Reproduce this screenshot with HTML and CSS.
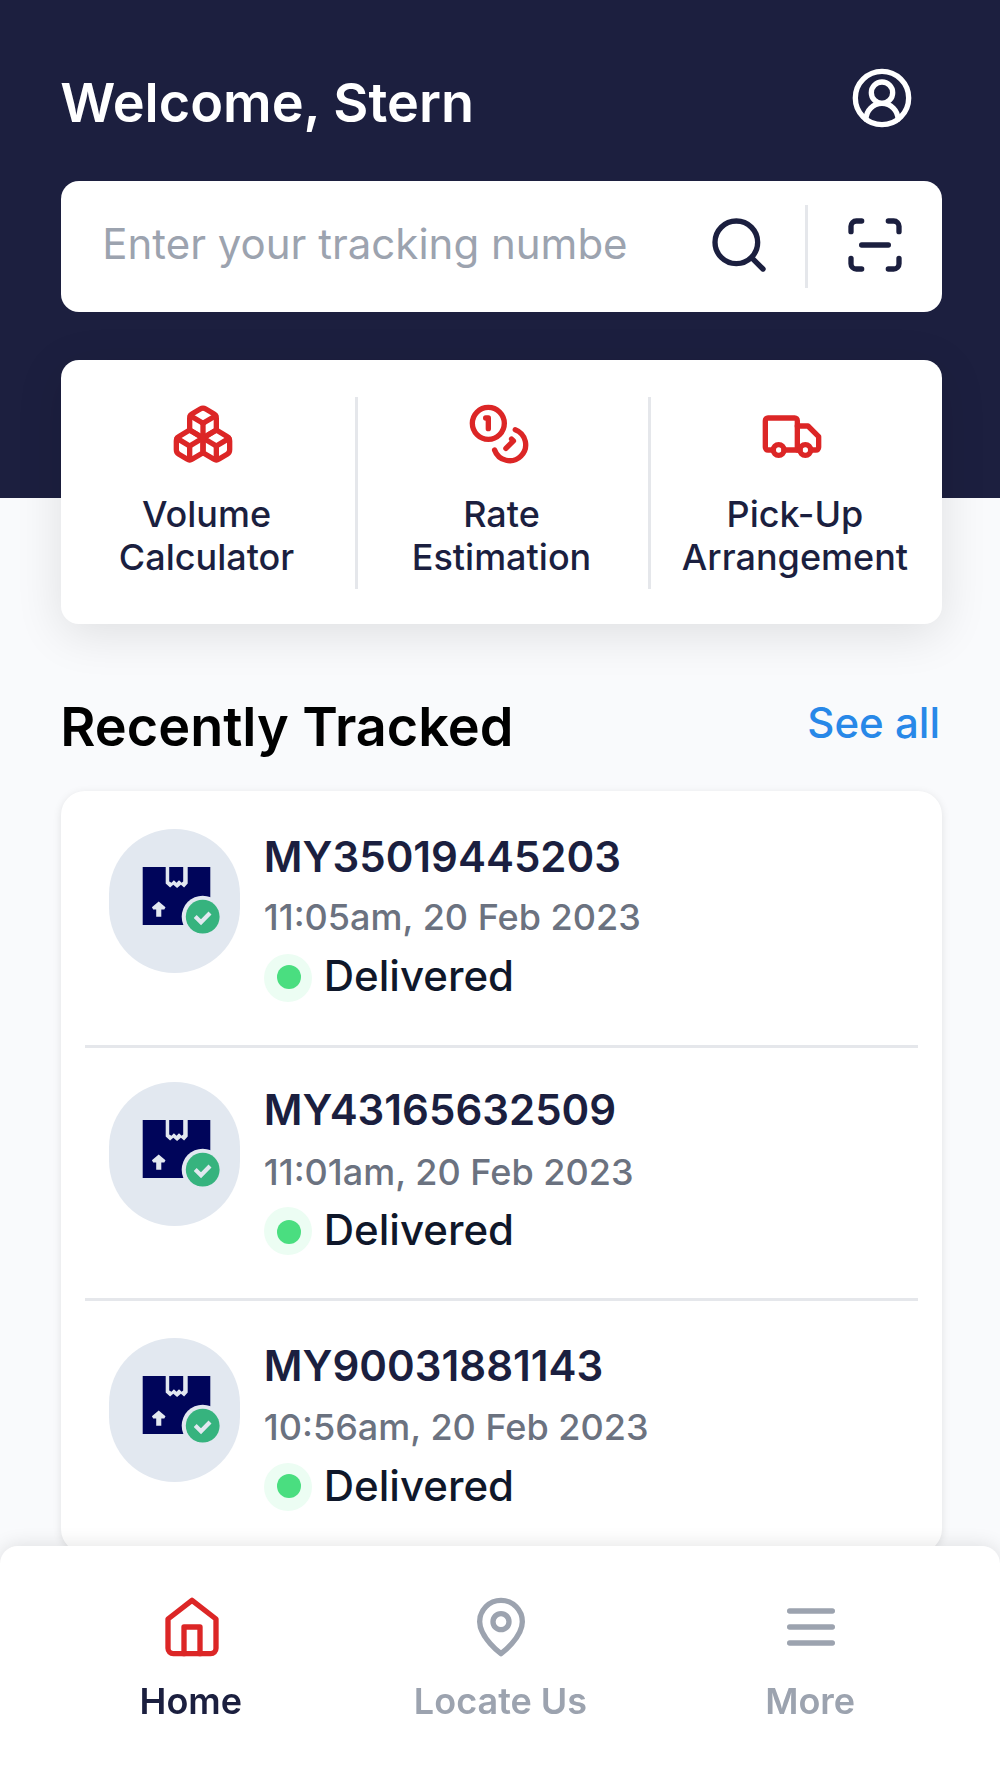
FILE: index.html
```html
<!DOCTYPE html>
<html lang="en">
<head>
    <meta charset="UTF-8">
    <meta name="viewport" content="width=device-width, initial-scale=1.0">
    <title>Parcel Tracking</title>
    <link rel="stylesheet" href="styles.css">
</head>
<body>
<!-- Shared package icon -->
<svg class="sprite" width="0" height="0">
    <symbol id="package" viewBox="0 0 131 144">
        <path fill="#00055a" d="M33.7 38h67.6v58H33.7z"/>
        <path fill="#e2e8f0" d="M56.7 37.5h22v17l-3.6 4-3.2-2.8-3.8 3.3-3.8-3.3-3.2 2.8-4.4-4z"/>
        <path fill="#00055a" d="M60.2 38h14v14.4l-1.6 1.4-2.6-2.6-2.5 2.6-2.6-2.6-2.4 2.6-2.3-1.4z"/>
        <path fill="#e2e8f0" d="M49.7 72.6l6.8 5.6-1.2 2.2h-3v7.4h-5.1v-7.4h-3l-1.3-2.2z"/>
        <circle cx="93.7" cy="87.7" r="21" fill="#e2e8f0"/>
        <circle cx="93.7" cy="87.7" r="16.9" fill="#36b37e"/>
        <path d="M86.2 87.6l5.8 5.6 9-9.2" fill="none" stroke="#e2e8f0" stroke-width="4.2"/>
    </symbol>
</svg>

<div class="header">
    <div class="header-top">
        <h1>Welcome, Stern</h1>
        <svg class="icon profile" viewBox="0 0 24 24"><path d="M18 20a6 6 0 0 0-12 0"/><circle cx="12" cy="10" r="4"/><circle cx="12" cy="12" r="10"/></svg>
    </div>
    <div class="search-box">
        <input type="text" placeholder="Enter your tracking numbe">
        <svg class="icon" viewBox="0 0 24 24"><circle cx="11" cy="11" r="8"/><path d="m21 21-4.3-4.3"/></svg>
        <span class="separator"></span>
        <svg class="icon" viewBox="0 0 24 24"><path d="M3 7V5a2 2 0 0 1 2-2h2"/><path d="M17 3h2a2 2 0 0 1 2 2v2"/><path d="M21 17v2a2 2 0 0 1-2 2h-2"/><path d="M7 21H5a2 2 0 0 1-2-2v-2"/><path d="M7 12h10"/></svg>
    </div>
</div>

<!-- Quick actions -->
<div class="actions">
    <div class="action">
        <svg class="icon" viewBox="0 0 24 24"><path d="M2.97 12.92A2 2 0 0 0 2 14.63v3.24a2 2 0 0 0 .97 1.71l3 1.8a2 2 0 0 0 2.06 0L12 19v-5.5l-5-3-4.03 2.42Z"/><path d="m7 16.5-4.74-2.85"/><path d="m7 16.5 5-3"/><path d="M7 16.5v5.17"/><path d="M12 13.5V19l3.97 2.38a2 2 0 0 0 2.06 0l3-1.8a2 2 0 0 0 .97-1.71v-3.24a2 2 0 0 0-.97-1.71L17 10.5l-5 3Z"/><path d="m17 16.5-5-3"/><path d="m17 16.5 4.74-2.85"/><path d="M17 16.5v5.17"/><path d="M7.97 4.42A2 2 0 0 0 7 6.13v4.37l5 3 5-3V6.13a2 2 0 0 0-.97-1.71l-3-1.8a2 2 0 0 0-2.06 0l-3 1.8Z"/><path d="M12 8 7.26 5.15"/><path d="m12 8 4.74-2.85"/><path d="M12 13.5V8"/></svg>
        <p>Volume<br>Calculator</p>
    </div>
    <div class="action">
        <svg class="icon" viewBox="0 0 24 24"><circle cx="8" cy="8" r="6"/><path d="M18.09 10.37A6 6 0 1 1 10.34 18"/><path d="M7 6h1v4"/><path d="m16.71 13.88.7.71-2.82 2.82"/></svg>
        <p>Rate<br>Estimation</p>
    </div>
    <div class="action">
        <svg class="icon" viewBox="0 0 24 24"><path d="M5 18H3c-.6 0-1-.4-1-1V7c0-.6.4-1 1-1h10c.6 0 1 .4 1 1v11"/><path d="M14 9h4l4 4v4c0 .6-.4 1-1 1h-2"/><circle cx="7" cy="18" r="2"/><path d="M15 18H9"/><circle cx="17" cy="18" r="2"/></svg>
        <p>Pick-Up<br>Arrangement</p>
    </div>
</div>

<!-- Recently tracked parcels -->
<div class="section-head">
    <h2>Recently Tracked</h2>
    <a href="#">See all</a>
</div>
<div class="parcels">
    <div class="parcel">
        <svg class="avatar"><use href="#package"/></svg>
        <div class="details">
            <h3>MY35019445203</h3>
            <p class="date">11:05am, 20 Feb 2023</p>
            <p class="status"><span class="dot"></span>Delivered</p>
        </div>
    </div>
    <div class="parcel middle">
        <svg class="avatar"><use href="#package"/></svg>
        <div class="details">
            <h3>MY43165632509</h3>
            <p class="date">11:01am, 20 Feb 2023</p>
            <p class="status"><span class="dot"></span>Delivered</p>
        </div>
    </div>
    <div class="parcel">
        <svg class="avatar"><use href="#package"/></svg>
        <div class="details">
            <h3>MY90031881143</h3>
            <p class="date">10:56am, 20 Feb 2023</p>
            <p class="status"><span class="dot"></span>Delivered</p>
        </div>
    </div>
</div>

<!-- Bottom navigation -->
<div class="navbar">
    <a class="nav-item active" href="#">
        <svg class="icon" viewBox="0 0 24 24"><path d="m3 9 9-7 9 7v11a2 2 0 0 1-2 2H5a2 2 0 0 1-2-2z"/><path d="M9 22V12h6v10"/></svg>
        <span>Home</span>
    </a>
    <a class="nav-item" href="#">
        <svg class="icon" viewBox="0 0 24 24"><path d="M20 10c0 6-8 12-8 12s-8-6-8-12a8 8 0 0 1 16 0Z"/><circle cx="12" cy="10" r="3"/></svg>
        <span>Locate Us</span>
    </a>
    <a class="nav-item" href="#">
        <svg class="icon" viewBox="0 0 24 24"><path d="M4 6h16"/><path d="M4 12h16"/><path d="M4 18h16"/></svg>
        <span>More</span>
    </a>
</div>
</body>
</html>
```
FILE: styles.css
```css
/* General reset */
* {
    margin: 0;
    padding: 0;
    box-sizing: border-box;
}

body {
    font-family: 'Inter', sans-serif;
    background: #f9fafc;
    color: #1b1f3f;
    height: 1778px;
    overflow: hidden;
}

a {
    text-decoration: none;
}

.sprite {
    position: absolute;
}

.icon {
    display: block;
    flex: none;
    width: 64px;
    height: 64px;
    fill: none;
    stroke: currentColor;
    stroke-width: 2;
    stroke-linecap: round;
    stroke-linejoin: round;
}

/* Header */
.header {
    height: 498.3px;
    padding: 66px 58.3px 0 61.3px;
    background: #1c1f3f;
}

.header-top {
    display: flex;
    justify-content: space-between;
    height: 114.7px;
    color: #fff;
}

.header-top h1 {
    margin: 5px 0 0 -1px;
    font-size: 54px;
    line-height: 64px;
    font-weight: 600;
}

.profile {
    margin-right: 27.4px;
}

.search-box {
    display: flex;
    align-items: center;
    height: 131px;
    padding: 0 34.7px 2px 41px;
    background: #fff;
    border-radius: 18px;
}

.search-box input {
    width: 540px;
    margin-right: auto;
    padding-bottom: 3px;
    border: none;
    outline: none;
    background: none;
    font: 400 42px 'Inter', sans-serif;
    color: #1b1f3f;
}

.search-box input::placeholder {
    color: #9ca3af;
}

.separator {
    width: 3px;
    height: 83px;
    margin: 2px 34.6px 0;
    background: #e5e7eb;
}

/* Quick actions */
.actions {
    position: relative;
    display: grid;
    grid-template-columns: repeat(3, 1fr);
    height: 264.2px;
    margin: -138.8px 58.3px 0 61.3px;
    background: #fff;
    border-radius: 18px;
    box-shadow: 0 10px 48px rgba(0, 0, 0, 0.11);
}

.action {
    display: flex;
    flex-direction: column;
    align-items: center;
    height: 192px;
    margin-top: 37.5px;
    padding: 5.2px 3px 0 0;
}

.action + .action {
    border-left: 3px solid #e5e7eb;
}

.action .icon {
    margin: 0 5px 27px 0;
    color: #dc2626;
}

.action:first-child .icon {
    margin-right: 8px;
}

.action p {
    font-size: 36px;
    line-height: 43px;
    font-weight: 500;
    text-align: center;
}

/* Recently tracked */
.section-head {
    display: flex;
    justify-content: space-between;
    margin: 71.2px 60px 32.3px 60.3px;
    line-height: 64px;
}

.section-head h2 {
    font-size: 54px;
    font-weight: 600;
    color: #000;
}

.section-head a {
    margin-top: -3.7px;
    font-size: 42px;
    font-weight: 500;
    color: #2888e8;
}

.parcels {
    height: 762px;
    margin: 0 58.3px 0 61.3px;
    padding: 0 24px;
    background: #fff;
    border-radius: 24px;
    box-shadow: 0 2px 8px rgba(0, 0, 0, 0.1);
}

.parcel {
    display: flex;
    height: 253.5px;
    padding: 37.5px 24px 0;
}

.parcel + .parcel {
    border-top: 3px solid #e5e7eb;
    padding-top: 37px;
}

.parcel.middle {
    padding-top: 34px;
}

.avatar {
    width: 131px;
    height: 144px;
    margin-right: 23.5px;
    background: #e2e8f0;
    border-radius: 66px;
}

.details h3 {
    margin-top: 1.3px;
    font-size: 42px;
    line-height: 53.3px;
    font-weight: 600;
}

.date {
    margin: 7.9px 0 5px;
    font-size: 36px;
    line-height: 53.3px;
    font-weight: 500;
    color: #6b7280;
}

.middle .date {
    margin: 10.2px 0 3px;
}

.status {
    display: flex;
    align-items: center;
    font-size: 42px;
    line-height: 53.3px;
    font-weight: 500;
    color: #0f172a;
}

/* Green dot with a soft halo, slightly off centre */
.dot {
    width: 48px;
    height: 48px;
    margin: 3px 12px 0 0;
    padding: 11px 0 0 13px;
    background: #ecfdf3;
    border-radius: 50%;
}

.middle .dot {
    padding-top: 13.3px;
}

.dot::before {
    content: "";
    display: block;
    width: 24px;
    height: 24px;
    background: #4ade80;
    border-radius: 50%;
}

/* Bottom navigation */
.navbar {
    position: fixed;
    left: 0;
    right: 0;
    bottom: 0;
    display: grid;
    grid-template-columns: repeat(3, 1fr);
    height: 232px;
    padding: 48.6px 34px 0 37px;
    background: #fff;
    border-radius: 18px 18px 0 0;
    box-shadow: 0 0 20px rgba(0, 0, 0, 0.12);
}

.nav-item {
    display: flex;
    flex-direction: column;
    align-items: center;
    color: #9ca3af;
    font-size: 36px;
    line-height: 48px;
    font-weight: 600;
}

.nav-item .icon {
    margin-bottom: 18.4px;
}

.nav-item span {
    margin-right: 2px;
}

.nav-item.active {
    color: #1b1f3f;
}

.nav-item.active .icon {
    color: #dc2626;
}
```
